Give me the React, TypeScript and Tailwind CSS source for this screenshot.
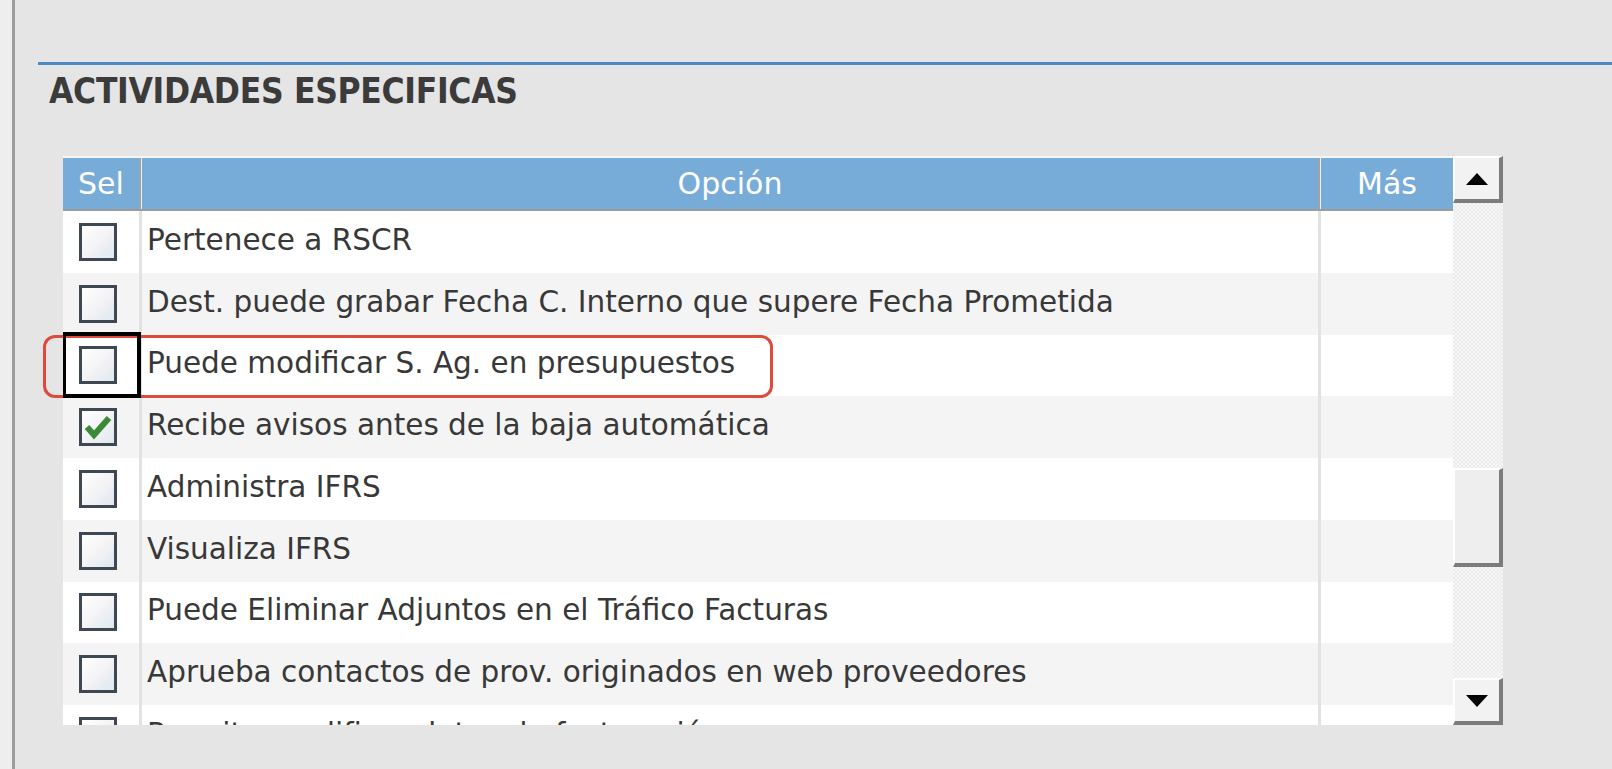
import { useState } from "react";

type Row = { label: string; checked: boolean };

const initialRows: Row[] = [
  { label: "Pertenece a RSCR", checked: false },
  { label: "Dest. puede grabar Fecha C. Interno que supere Fecha Prometida", checked: false },
  { label: "Puede modificar S. Ag. en presupuestos", checked: false },
  { label: "Recibe avisos antes de la baja automática", checked: true },
  { label: "Administra IFRS", checked: false },
  { label: "Visualiza IFRS", checked: false },
  { label: "Puede Eliminar Adjuntos en el Tráfico Facturas", checked: false },
  { label: "Aprueba contactos de prov. originados en web proveedores", checked: false },
  { label: "Permite modificar datos de facturación", checked: false },
];

function Checkbox({ checked }: { checked: boolean }) {
  return (
    <span className="block h-[38px] w-[38px] border-[3px] border-[#3e4852] bg-linear-to-br from-white via-[#f4f3f5] to-[#dfe8ef]">
      {checked && (
        <svg width="32" height="32" viewBox="0 0 32 32">
          <polyline points="5,16 12,24 27,7" fill="none" stroke="#3b8a37" strokeWidth="6" />
        </svg>
      )}
    </span>
  );
}

function ScrollButton({ dir }: { dir: "up" | "down" }) {
  return (
    <div className="flex h-[47px] items-center justify-center border-t-2 border-l-2 border-r-4 border-b-4 border-t-white border-l-white border-r-[#7c7c7c] border-b-[#7c7c7c] bg-[#f2f2f2]">
      <svg width="22" height="12" viewBox="0 0 22 12">
        <polygon points={dir === "up" ? "11,0 22,12 0,12" : "0,0 22,0 11,12"} fill="#000" />
      </svg>
    </div>
  );
}

export default function App() {
  const [rows, setRows] = useState(initialRows);
  const focused = 2;

  const toggle = (i: number) =>
    setRows((r) => r.map((row, j) => (j === i ? { ...row, checked: !row.checked } : row)));

  return (
    <div className="relative flex h-screen w-full overflow-hidden bg-[#e5e5e5] font-['DejaVu_Sans',Verdana,sans-serif] text-[#383838]">
      <div className="w-[12px] shrink-0 bg-[#eeeeee]" />
      <div className="w-[3px] shrink-0 bg-[#9d9d9d]" />

      <div className="flex-1 pl-[23px] pt-[62px]">
        <section className="border-t-[3px] border-[#4a8bc6]">
          <h2 className="mt-[6px] pl-[11px] text-[35px] leading-[41px] font-bold tracking-[-0.3px] text-[#3b3b3b] font-['DejaVu_Sans_Condensed','DejaVu_Sans',sans-serif] font-stretch-condensed">
            ACTIVIDADES ESPECIFICAS
          </h2>

          <div className="mt-[44px] ml-[25px] flex">
            <div className="w-[1390px]">
              <div className="flex h-[55px] border-t-2 border-b-2 border-t-[#f6f6f6] border-b-[#9c9c9c] bg-[#77acd9] text-[30px] text-white">
                <div className="flex w-[76px] items-center justify-center">Sel</div>
                <div className="w-[2px] bg-[#a3a3a3]" />
                <div className="w-px bg-[#e6eef6]" />
                <div className="flex flex-1 items-center justify-center">Opción</div>
                <div className="w-[2px] bg-[#a3a3a3]" />
                <div className="w-px bg-[#e6eef6]" />
                <div className="flex w-[132px] items-center justify-center">Más</div>
              </div>

              <div className="h-[514px] overflow-hidden">
                {rows.map((row, i) => (
                  <div
                    key={row.label}
                    className={`flex h-[61.75px] text-[29.5px] ${i % 2 === 1 ? "bg-[#f4f4f4]" : "bg-white"}`}
                  >
                    <div className="relative flex w-[76px] items-center pl-[16px]">
                      <button type="button" onClick={() => toggle(i)}>
                        <Checkbox checked={row.checked} />
                      </button>
                      {i === focused && (
                        <span className="pointer-events-none absolute -top-[3px] -bottom-[2px] -left-[1px] -right-[2px] z-10 border-4 border-black" />
                      )}
                    </div>
                    <div className="w-[3px] bg-[#e2e2e2]" />
                    <div className="flex flex-1 items-center pb-[4px] pl-[5px] whitespace-nowrap">{row.label}</div>
                    <div className="w-[3px] bg-[#e2e2e2]" />
                    <div className="w-[132px]" />
                  </div>
                ))}
              </div>
            </div>

            <div className="flex w-[50px] flex-col">
              <ScrollButton dir="up" />
              <div className="flex-1 bg-[repeating-conic-gradient(#ebebeb_0_25%,#f7f7f7_0_50%)] bg-[length:4px_4px]">
                <div className="mt-[265px] h-[99px] border-t-2 border-l-2 border-r-4 border-b-4 border-t-white border-l-white border-r-[#7c7c7c] border-b-[#7c7c7c] bg-[#eeeeee]" />
              </div>
              <ScrollButton dir="down" />
            </div>
          </div>
        </section>
      </div>

      <div className="pointer-events-none absolute left-[43px] top-[335px] h-[63px] w-[730px] rounded-[12px] border-[3px] border-[#de4b3b]" />
    </div>
  );
}
